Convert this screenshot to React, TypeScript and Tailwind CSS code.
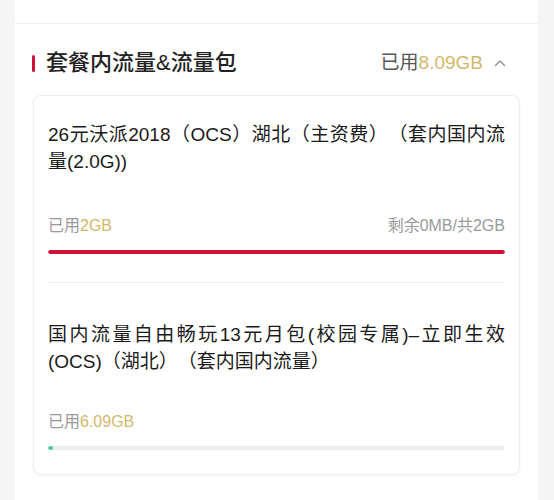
import type { ReactNode } from "react";

const FONT = { fontFamily: '"Liberation Sans", "Noto Sans CJK SC", sans-serif' };

interface Plan {
  title: string;
  used: string;
  remain?: string;
  percent: number;
  tone: "red" | "green";
}

const PLANS: Plan[] = [
  {
    title: "26元沃派2018（OCS）湖北（主资费）（套内国内流量(2.0G))",
    used: "2GB",
    remain: "剩余0MB/共2GB",
    percent: 100,
    tone: "red",
  },
  {
    title: "国内流量自由畅玩13元月包(校园专属)–立即生效(OCS)（湖北）（套内国内流量）",
    used: "6.09GB",
    percent: 1,
    tone: "green",
  },
];

function ChevronUp() {
  return (
    <svg width="12" height="8" viewBox="0 0 12 8" fill="none" className="ml-[11px]">
      <path d="M1.5 6.5 6 2l4.5 4.5" stroke="#8a8a8a" strokeWidth="1.3" strokeLinecap="round" strokeLinejoin="round" />
    </svg>
  );
}

function PlanItem({
  plan,
  className,
  metaGap,
  children,
}: {
  plan: Plan;
  className: string;
  metaGap: string;
  children?: ReactNode;
}) {
  return (
    <div className={className}>
      <p className="text-[19px] leading-[27px] text-[#1a1a1a] text-justify [text-spacing-trim:space-all]">{plan.title}</p>
      <div className={`${metaGap} flex items-center justify-between text-[16px] leading-[22px] text-[#9a9a9a]`}>
        <span>
          已用<span className="text-[#d2b86c]">{plan.used}</span>
        </span>
        {plan.remain && <span>{plan.remain}</span>}
      </div>
      <div className="mt-[13px] h-[4px] rounded-full bg-[#eeeeee] overflow-hidden">
        <div
          className={plan.tone === "red" ? "h-full rounded-full bg-[#cf1237]" : "h-full rounded-full bg-[#4fc59a]"}
          style={{ width: `${plan.percent}%` }}
        />
      </div>
      {children}
    </div>
  );
}

export default function App() {
  return (
    <div className="min-h-[500px] bg-[#f5f5f5]" style={FONT}>
      <div className="ml-[15px] w-[523px] min-h-[500px] bg-white">
        <div className="h-[24px] border-b border-[#eeeeee]" />

        <div className="flex items-center justify-between pl-[17px] pr-[32px] pt-[24px] pb-[17px]">
          <div className="flex items-center">
            <span className="w-[3px] h-[17px] rounded-full bg-[#cf1237]" />
            <h2 className="ml-[11px] text-[22px] leading-[30px] font-medium text-[#222]">套餐内流量&amp;流量包</h2>
          </div>
          <div className="flex items-center text-[19px] leading-[24px] text-[#555]">
            已用<span className="text-[#d2b86c]">8.09GB</span>
            <ChevronUp />
          </div>
        </div>

        <div className="mx-[18px] rounded-[8px] border border-[#eeeeee] bg-white shadow-[0_1px_4px_rgba(0,0,0,0.04)] px-[14px]">
          <PlanItem plan={PLANS[0]} metaGap="mt-[40px]" className="pt-[25px] pb-[28px] border-b border-[#f0f0f0]" />
          <PlanItem plan={PLANS[1]} metaGap="mt-[36px]" className="pt-[38px] pb-[24px]" />
        </div>
      </div>
    </div>
  );
}
